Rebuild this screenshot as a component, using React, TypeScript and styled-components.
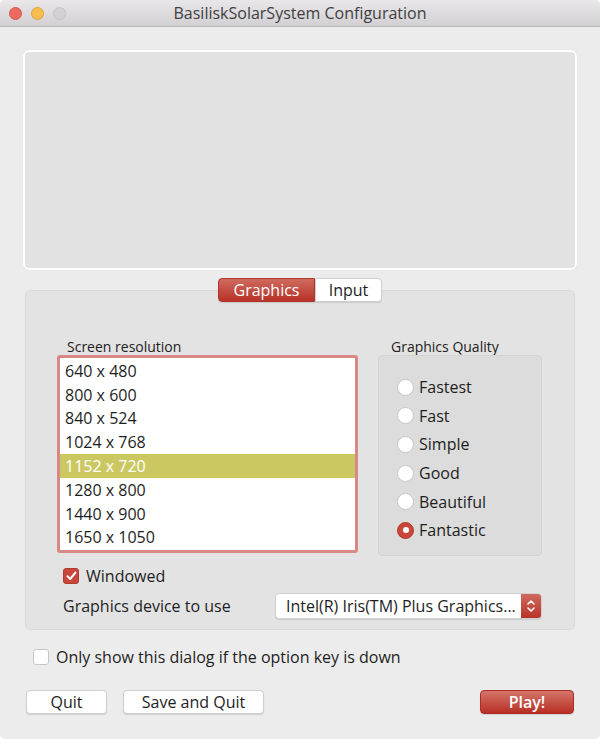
import React from "react";
import styled, { createGlobalStyle } from "styled-components";

const Global = createGlobalStyle`
  html, body { margin: 0; padding: 0; background: #ffffff; }
  body { font-family: "Open Sans", Roboto, "Liberation Sans", Arial, sans-serif; color: #1e1e1e; }
  * { box-sizing: border-box; }
`;

const Window = styled.div`
  width: 600px;
  height: 739px;
  background: #ececec;
  border-radius: 5px;
  overflow: hidden;
  display: flex;
  flex-direction: column;
`;

const TitleBar = styled.div`
  height: 27px;
  flex: none;
  background: linear-gradient(#e9e7e9, #d2d0d2);
  border-bottom: 1px solid #b8b8b8;
  display: grid;
  grid-template-columns: 80px 1fr 80px;
  align-items: center;
`;

const Lights = styled.div`
  display: flex;
  gap: 9px;
  padding-left: 9px;
`;

const Light = styled.span<{ $c: string; $b: string }>`
  width: 13px;
  height: 13px;
  border-radius: 50%;
  background: ${(p) => p.$c};
  border: 1px solid ${(p) => p.$b};
`;

const Title = styled.div`
  text-align: center;
  font-size: 16px;
  color: #3f3f3f;
  white-space: nowrap;
`;

const Body = styled.div`
  display: flex;
  flex-direction: column;
  padding: 23px 23px 0;
`;

const ImageWell = styled.div`
  height: 220px;
  border: 2px solid #ffffff;
  border-radius: 6px;
  background: #e2e2e2;
  box-shadow: 0 0 1px rgba(0, 0, 0, 0.15);
`;

const TabsRow = styled.div`
  display: flex;
  justify-content: center;
  margin-top: 8px;
  position: relative;
  z-index: 1;
  height: 24px;
`;

const Segment = styled.div<{ $active?: boolean; $w: number }>`
  width: ${(p) => p.$w}px;
  height: 24px;
  display: flex;
  align-items: center;
  justify-content: center;
  font-size: 16px;
  color: ${(p) => (p.$active ? "#ffffff" : "#1e1e1e")};
  background: ${(p) => (p.$active ? "linear-gradient(#cf6a60, #b93226)" : "#ffffff")};
  border: 1px solid ${(p) => (p.$active ? "#b0362b" : "#cfcfcf")};
  border-radius: ${(p) => (p.$active ? "4px 0 0 4px" : "0 4px 4px 0")};
  box-shadow: 0 1px 1px rgba(0, 0, 0, 0.12);
`;

const TabBox = styled.div`
  margin: -12px 2px 0;
  height: 340px;
  background: #e3e3e3;
  border: 1px solid #d9d9d9;
  border-radius: 5px;
  padding: 47px 32px 0 31px;
  display: flex;
  flex-direction: column;
`;

const Columns = styled.div`
  display: flex;
  gap: 20px;
`;

const Column = styled.div`
  display: flex;
  flex-direction: column;
`;

const GroupLabel = styled.div<{ $indent: number }>`
  font-size: 14px;
  line-height: 17px;
  padding-left: ${(p) => p.$indent}px;
  color: #222;
`;

const ListBox = styled.div`
  width: 301px;
  height: 198px;
  border: 3px solid #d98985;
  border-radius: 3px;
  background: #ffffff;
  display: flex;
  flex-direction: column;
  padding-top: 1px;
`;

const ListRow = styled.div<{ $sel?: boolean }>`
  height: 23.8px;
  display: flex;
  align-items: center;
  padding-left: 5px;
  font-size: 16px;
  background: ${(p) => (p.$sel ? "#cbc862" : "transparent")};
  color: ${(p) => (p.$sel ? "#ffffff" : "#1e1e1e")};
`;

const Group = styled.div`
  width: 164px;
  height: 201px;
  background: #dcdcdc;
  border: 1px solid #d3d3d3;
  border-radius: 4px;
  padding: 17px 0 0 18px;
  display: flex;
  flex-direction: column;
`;

const RadioRow = styled.div`
  height: 28.6px;
  display: flex;
  align-items: center;
  gap: 5px;
  font-size: 16px;
`;

const Radio = styled.span<{ $on?: boolean }>`
  width: 17px;
  height: 17px;
  border-radius: 50%;
  background: ${(p) => (p.$on ? "#c8473a" : "#ffffff")};
  border: 1px solid ${(p) => (p.$on ? "#b53a2e" : "#c6c6c6")};
  display: flex;
  align-items: center;
  justify-content: center;
  &::after {
    content: "";
    width: 6px;
    height: 6px;
    border-radius: 50%;
    background: #ffffff;
    display: ${(p) => (p.$on ? "block" : "none")};
  }
`;

const CheckRow = styled.div<{ $ml: number; $mt: number }>`
  display: flex;
  align-items: center;
  gap: 7px;
  margin-left: ${(p) => p.$ml}px;
  margin-top: ${(p) => p.$mt}px;
  font-size: 16px;
  height: 18px;
`;

const CheckBox = styled.span<{ $on?: boolean }>`
  width: 16px;
  height: 16px;
  border-radius: 3px;
  background: ${(p) => (p.$on ? "#c8473a" : "#ffffff")};
  border: 1px solid ${(p) => (p.$on ? "#b53a2e" : "#c6c6c6")};
  display: flex;
  align-items: center;
  justify-content: center;
`;

const DeviceRow = styled.div`
  display: flex;
  align-items: center;
  justify-content: space-between;
  margin: 8px 0 0 6px;
  font-size: 16px;
`;

const Popup = styled.div`
  width: 267px;
  height: 26px;
  background: #ffffff;
  border: 1px solid #d0d0d0;
  border-radius: 4px;
  display: flex;
  align-items: center;
  box-shadow: 0 1px 1px rgba(0, 0, 0, 0.1);
  overflow: hidden;
`;

const PopupText = styled.div`
  flex: 1;
  padding-left: 10px;
  font-size: 16px;
  white-space: nowrap;
  overflow: hidden;
`;

const Stepper = styled.div`
  width: 20px;
  flex: none;
  height: 100%;
  background: linear-gradient(#cf6a60, #b93226);
  display: flex;
  align-items: center;
  justify-content: center;
`;

const ButtonRow = styled.div`
  display: flex;
  align-items: center;
  margin: 24px 3px 0;
  gap: 16px;
`;

const Button = styled.div<{ $w: number; $primary?: boolean }>`
  width: ${(p) => p.$w}px;
  height: 24px;
  display: flex;
  align-items: center;
  justify-content: center;
  font-size: 16px;
  border-radius: 4px;
  background: ${(p) => (p.$primary ? "linear-gradient(#d4756b, #b82f24)" : "#ffffff")};
  color: ${(p) => (p.$primary ? "#ffffff" : "#1e1e1e")};
  font-weight: ${(p) => (p.$primary ? 600 : 400)};
  border: 1px solid ${(p) => (p.$primary ? "#ad2d22" : "#cfcfcf")};
  box-shadow: 0 1px 1px rgba(0, 0, 0, 0.12);
`;

const Spacer = styled.div`
  flex: 1;
`;

const resolutions = [
  "640 x 480",
  "800 x 600",
  "840 x 524",
  "1024 x 768",
  "1152 x 720",
  "1280 x 800",
  "1440 x 900",
  "1650 x 1050",
];

const qualities = ["Fastest", "Fast", "Simple", "Good", "Beautiful", "Fantastic"];

export default function App() {
  return (
    <>
      <Global />
      <Window>
        <TitleBar>
          <Lights>
            <Light $c="#ee6a5f" $b="#d9544a" />
            <Light $c="#f5be4f" $b="#dea236" />
            <Light $c="#d3d1d3" $b="#c4c2c4" />
          </Lights>
          <Title>BasiliskSolarSystem Configuration</Title>
          <span />
        </TitleBar>
        <Body>
          <ImageWell />
          <TabsRow>
            <Segment $active $w={97}>Graphics</Segment>
            <Segment $w={67}>Input</Segment>
          </TabsRow>
          <TabBox>
            <Columns>
              <Column>
                <GroupLabel $indent={10}>Screen resolution</GroupLabel>
                <ListBox>
                  {resolutions.map((r) => (
                    <ListRow key={r} $sel={r === "1152 x 720"}>
                      {r}
                    </ListRow>
                  ))}
                </ListBox>
              </Column>
              <Column>
                <GroupLabel $indent={13}>Graphics Quality</GroupLabel>
                <Group>
                  {qualities.map((q) => (
                    <RadioRow key={q}>
                      <Radio $on={q === "Fantastic"} />
                      {q}
                    </RadioRow>
                  ))}
                </Group>
              </Column>
            </Columns>
            <CheckRow $ml={6} $mt={11}>
              <CheckBox $on>
                <svg width="11" height="10" viewBox="0 0 11 10">
                  <path d="M1.5 5.2 L4.2 8 L9.5 1.5" fill="none" stroke="#fff" strokeWidth="2" strokeLinecap="round" strokeLinejoin="round" />
                </svg>
              </CheckBox>
              Windowed
            </CheckRow>
            <DeviceRow>
              <span>Graphics device to use</span>
              <Popup>
                <PopupText>Intel(R) Iris(TM) Plus Graphics...</PopupText>
                <Stepper>
                  <svg width="10" height="16" viewBox="0 0 10 16">
                    <path d="M2 6 L5 3 L8 6 M2 10 L5 13 L8 10" fill="none" stroke="#fff" strokeWidth="1.6" strokeLinecap="round" strokeLinejoin="round" />
                  </svg>
                </Stepper>
              </Popup>
            </DeviceRow>
          </TabBox>
          <CheckRow $ml={10} $mt={18}>
            <CheckBox />
            Only show this dialog if the option key is down
          </CheckRow>
          <ButtonRow>
            <Button $w={81}>Quit</Button>
            <Button $w={141}>Save and Quit</Button>
            <Spacer />
            <Button $w={94} $primary>Play!</Button>
          </ButtonRow>
        </Body>
      </Window>
    </>
  );
}
